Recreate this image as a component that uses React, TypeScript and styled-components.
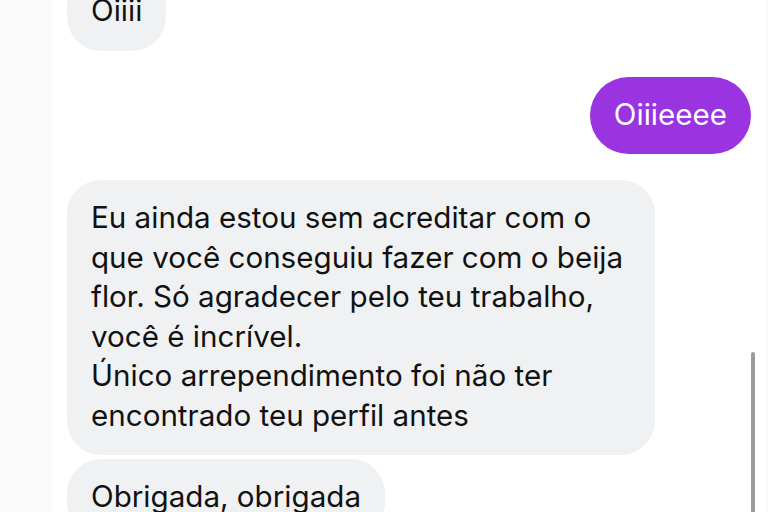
import React from "react";
import styled, { createGlobalStyle } from "styled-components";

interface Message {
  id: number;
  fromMe: boolean;
  text: string;
  wide?: boolean;
  grouped?: boolean;
}

const messages: Message[] = [
  { id: 1, fromMe: false, text: "Oiiii" },
  { id: 2, fromMe: true, text: "Oiiieeee" },
  {
    id: 3,
    fromMe: false,
    wide: true,
    text:
      "Eu ainda estou sem acreditar com o\nque você conseguiu fazer com o beija\nflor. Só agradecer pelo teu trabalho,\nvocê é incrível.\nÚnico arrependimento foi não ter\nencontrado teu perfil antes",
  },
  { id: 4, fromMe: false, grouped: true, text: "Obrigada, obrigada" },
];

const GlobalStyle = createGlobalStyle`
  html, body {
    margin: 0;
    padding: 0;
    width: 768px;
    height: 512px;
    overflow: hidden;
    background: #ffffff;
  }
  #root {
    height: 100%;
  }
`;

const Page = styled.div`
  display: flex;
  height: 512px;
  width: 768px;
  overflow: hidden;
  font-family: Inter, "Noto Sans", "Liberation Sans", sans-serif;
`;

const SideRail = styled.div<{ $w: number }>`
  flex: 0 0 ${(p) => p.$w}px;
  background: #fafafa;
`;

const ChatArea = styled.div`
  position: relative;
  flex: 1;
  background: #ffffff;
  overflow: hidden;
`;

// the thread is scrolled: the first bubble starts above the top edge
const Thread = styled.div`
  display: flex;
  flex-direction: column;
  margin-top: -27px;
  padding: 0 14px 0 15px;
`;

const Row = styled.div<{ $mine: boolean; $grouped?: boolean }>`
  display: flex;
  justify-content: ${(p) => (p.$mine ? "flex-end" : "flex-start")};
  margin-top: ${(p) => (p.$grouped ? 4 : 26)}px;

  &:first-child {
    margin-top: 0;
  }
`;

const Bubble = styled.div<{ $mine: boolean; $wide?: boolean }>`
  box-sizing: border-box;
  width: ${(p) => (p.$wide ? "588px" : "auto")};
  max-width: 588px;
  padding: 18px 24px 20px 24px;
  border-radius: ${(p) => (p.$mine ? "39px" : "34px")};
  background: ${(p) => (p.$mine ? "#9a33e0" : "#f0f1f3")};
  color: ${(p) => (p.$mine ? "#ffffff" : "#111111")};
  font-size: 29.6px;
  line-height: 39.5px;
  white-space: pre-line;
`;

const Scrollbar = styled.div`
  position: absolute;
  right: 10px;
  top: 352px;
  width: 4px;
  height: 200px;
  border-radius: 2px;
  background: #9c9c9c;
`;

export default function App() {
  return (
    <>
      <GlobalStyle />
      <Page>
        <SideRail $w={52} />
        <ChatArea>
          <Thread>
            {messages.map((m) => (
              <Row key={m.id} $mine={m.fromMe} $grouped={m.grouped}>
                <Bubble $mine={m.fromMe} $wide={m.wide}>
                  {m.text}
                </Bubble>
              </Row>
            ))}
          </Thread>
          <Scrollbar />
        </ChatArea>
        <SideRail $w={3} />
      </Page>
    </>
  );
}
